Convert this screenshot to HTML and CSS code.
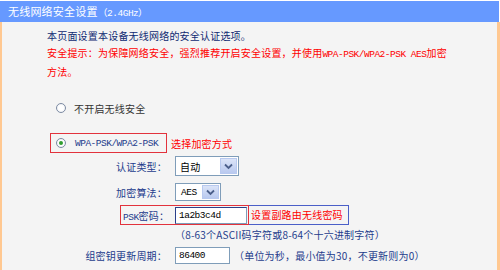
FILE: index.html
```html
<!DOCTYPE html>
<html lang="zh-CN">

<head>
    <meta charset="UTF-8">
    <meta name="viewport" content="width=device-width, initial-scale=1.0">
    <title>无线网络安全设置</title>
    <link rel="stylesheet" href="styles.css">
</head>

<body>
    <div class="title-bar">无线网络安全设置<span class="en">（2.4GHz）</span></div>

    <div class="panel">
        <div class="intro">
            <p>本页面设置本设备无线网络的安全认证选项。</p>
            <p class="warn">安全提示：为保障网络安全，强烈推荐开启安全设置，并使用<span class="en">WPA-PSK/WPA2-PSK AES</span>加密<br>方法。</p>
        </div>

        <div class="radio-row">
            <span class="radio"></span>
            <span class="radio-text">不开启无线安全</span>
        </div>

        <div class="radio-row boxed-row">
            <div class="mark mark-radio">
                <span class="radio checked"></span>
                <span class="radio-text en navy">WPA-PSK/WPA2-PSK</span>
            </div>
            <span class="red-note">选择加密方式</span>
        </div>

        <div class="form-row row-auth">
            <span class="label">认证类型：</span>
            <div class="select sel-auth">
                <span class="sel-value">自动</span>
                <span class="sel-btn"><svg width="9" height="7" viewBox="0 0 9 7"><path d="M1 1.5 L4.5 5 L8 1.5" fill="none" stroke="#4b5f8a" stroke-width="1.8"/></svg></span>
            </div>
        </div>

        <div class="form-row row-alg">
            <span class="label">加密算法：</span>
            <div class="select sel-alg">
                <span class="sel-value en">AES</span>
                <span class="sel-btn"><svg width="9" height="7" viewBox="0 0 9 7"><path d="M1 1.5 L4.5 5 L8 1.5" fill="none" stroke="#4b5f8a" stroke-width="1.8"/></svg></span>
            </div>
        </div>

        <div class="form-row row-psk">
            <div class="mark mark-psk">
                <span class="label label-psk"><span class="en">PSK</span>密码：</span>
                <input type="text" class="text-input input-psk" value="1a2b3c4d">
            </div>
            <span class="note-box">设置副路由无线密码</span>
        </div>

        <div class="hint">（8-63个ASCII码字符或8-64个十六进制字符）</div>

        <div class="form-row row-period">
            <span class="label">组密钥更新周期：</span>
            <input type="text" class="text-input input-period" value="86400">
            <span class="unit">（单位为秒，最小值为30，不更新则为0）</span>
        </div>
    </div>
</body>

</html>
```

FILE: styles.css
```css
body {
    margin: 0;
    font-family: "Noto Sans CJK SC", sans-serif;
    font-size: 10px;
    letter-spacing: 0.2px;
    background: #ffffff;
}

p {
    margin: 0;
}

.en {
    font-family: "Liberation Mono", monospace;
    font-size: 9.5px;
    letter-spacing: -0.5px;
}

.navy {
    color: #1e3c8c;
}

.title-bar {
    height: 21px;
    margin-top: 1px;
    margin-right: 1px;
    padding-left: 8px;
    background: #6699ff;
    color: #ffffff;
    font-size: 11px;
    line-height: 21px;
}

.title-bar .en {
    font-size: 9.5px;
}

.panel {
    height: 248px;
    padding: 5px 0 0 45px;
    background: #f4f4f4;
    border-left: 3px solid #ffc891;
    border-right: 3px solid #ffc891;
    box-sizing: border-box;
    margin-left: -1px;
    color: #1e3c8c;
}

.intro {
    line-height: 17px;
    color: #0f2a72;
    white-space: nowrap;
}

.warn {
    color: #ff0000;
}

.radio-row {
    display: flex;
    align-items: center;
    height: 16px;
    margin-top: 20px;
    padding-left: 9px;
    color: #333333;
}

.radio {
    width: 10px;
    height: 10px;
    box-sizing: border-box;
    border: 1px solid #7d8ba3;
    border-radius: 50%;
    background: radial-gradient(circle, #ffffff 40%, #e6e9ef 100%);
    display: flex;
    align-items: center;
    justify-content: center;
}

.radio.checked::after {
    content: "";
    width: 4px;
    height: 4px;
    border-radius: 50%;
    background: #2f9d2f;
}

.radio-text {
    margin-left: 8px;
}

.boxed-row {
    margin-top: 17px;
    height: 20px;
    padding-left: 3px;
}

.mark {
    display: flex;
    align-items: center;
    border: 1px solid #e2323c;
    box-sizing: border-box;
}

.mark-radio {
    width: 117px;
    height: 20px;
    padding-left: 5px;
}

.mark-radio .radio-text {
    margin-left: 9px;
}

.red-note {
    margin-left: 4px;
    color: #ff0000;
}

.form-row {
    display: flex;
    align-items: center;
}

.label {
    width: 120px;
    text-align: right;
    margin-right: 8px;
    flex-shrink: 0;
    white-space: nowrap;
}

.row-auth {
    margin-top: 3px;
    height: 20px;
}

.row-alg {
    margin-top: 7px;
    height: 18px;
}

.select {
    display: flex;
    align-items: stretch;
    height: 100%;
    box-sizing: border-box;
    border: 1px solid #7f9db9;
    background: #ffffff;
    color: #000000;
}

.sel-auth {
    width: 64px;
}

.sel-alg {
    width: 46px;
}

.sel-value {
    flex: 1;
    padding-left: 4px;
    display: flex;
    align-items: center;
}

.sel-alg .sel-value {
    padding-left: 5px;
}

.sel-btn {
    width: 15px;
    margin: 1px;
    background: linear-gradient(#dbe4f8, #b9c9ef);
    border: 1px solid #b8c9ef;
    display: flex;
    align-items: center;
    justify-content: center;
}

.row-psk {
    margin-top: 4px;
    height: 20px;
}

.mark-psk {
    height: 20px;
    margin-left: 73px;
    padding: 0 1px 0 2px;
}

.label-psk {
    width: 44px;
    margin-right: 8px;
}

.text-input {
    height: 17px;
    box-sizing: border-box;
    border: 1px solid #7f9db9;
    background: #ffffff;
    padding: 0 0 0 3px;
    font-family: "Liberation Mono", monospace;
    font-size: 9.5px;
    letter-spacing: -0.5px;
    color: #000000;
    outline: none;
}

.input-psk {
    width: 72px;
    border-color: #2b3f8a #7f9db9 #7f9db9 #2b3f8a;
}

.note-box {
    height: 20px;
    box-sizing: border-box;
    border: 1px solid #4b5fc8;
    border-left: none;
    padding: 0 5px 0 2px;
    line-height: 18px;
    color: #ff0000;
}

.hint {
    margin: 3px 0 0 128px;
    line-height: 14px;
}

.row-period {
    margin-top: 5px;
}

.input-period {
    width: 55px;
}

.unit {
    margin-left: 4px;
}
```
